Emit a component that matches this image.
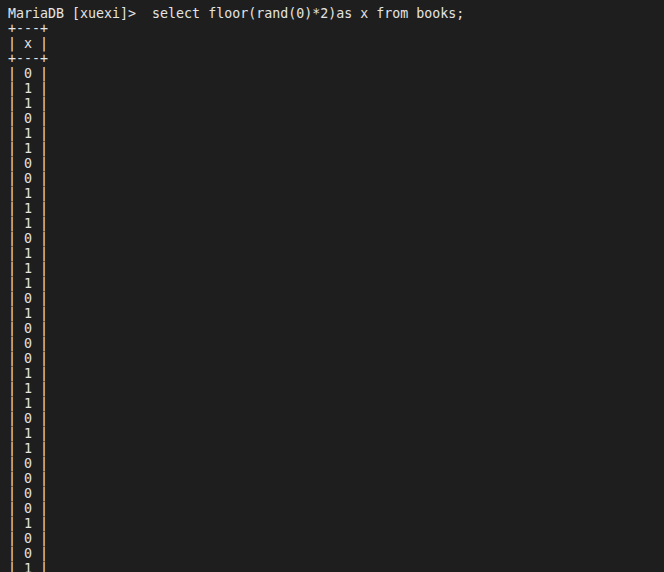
const rows = [0, 1, 1, 0, 1, 1, 0, 0, 1, 1, 1, 0, 1, 1, 1, 0, 1, 0, 0, 0, 1, 1, 1, 0, 1, 1, 0, 0, 0, 0, 1, 0, 0, 1];

export default function App() {
  const lines = [
    "MariaDB [xuexi]>  select floor(rand(0)*2)as x from books;",
    "+---+",
    "| x |",
    "+---+",
    ...rows.map((v) => `| ${v} |`),
  ];

  return (
    <div className="w-[664px] h-[572px] overflow-hidden bg-[#1e1e1e] pl-[8px] pt-[6px]">
      <pre className="font-['DejaVu_Sans_Mono',monospace] text-[13.3px] leading-[15px] text-[#e4e4e4] whitespace-pre">
        {lines.map((l, i) => (
          <div key={i}>{l}</div>
        ))}
      </pre>
    </div>
  );
}
